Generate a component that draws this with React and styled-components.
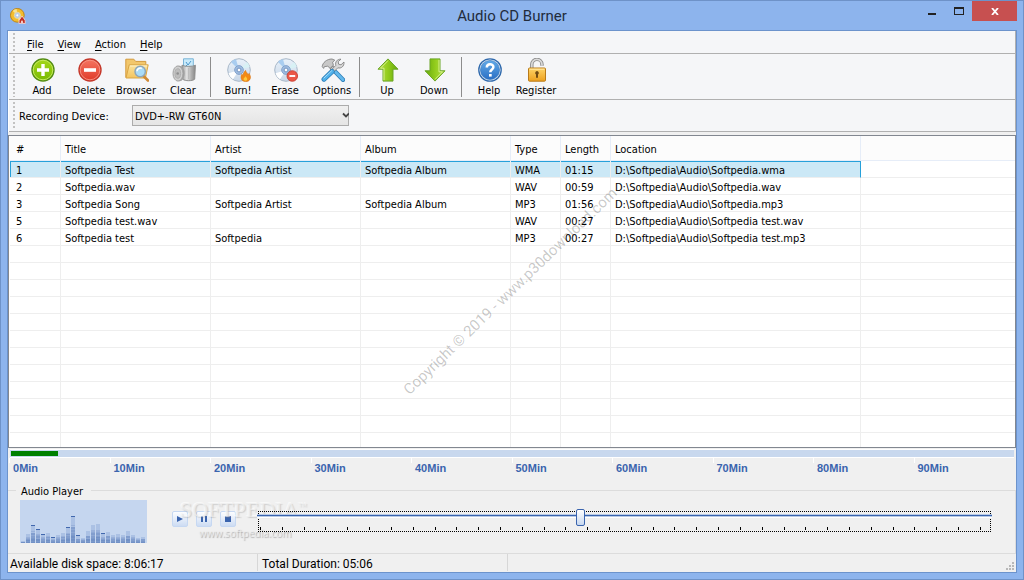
import React, { useState } from "react";
import styled, { createGlobalStyle } from "styled-components";

const theme = {
  frame: "#8db4ed",
  frameEdge: "#6e92c8",
  face: "#f0f0f0",
  bar: "#f5f6f8",
  line: "#b0b0b0",
  grid: "#eeeeee",
  blue: "#3a64ae",
};

const GlobalStyle = createGlobalStyle`
  * {
    box-sizing: border-box;
  }
  body {
    margin: 0;
    font-family: "DejaVu Sans Condensed", "Noto Sans", sans-serif;
    font-size: 11px;
    line-height: 14px;
    color: #000;
  }
  button, select, input {
    font: inherit;
    color: inherit;
    margin: 0;
  }
`;

const Window = styled.div`
  display: flex;
  flex-direction: column;
  height: 100vh;
  min-height: 400px;
  padding: 0 6px 6px;
  border: 1px solid ${theme.frameEdge};
  background: ${theme.frame};
`;

const TitleBar = styled.header`
  display: grid;
  grid-template-columns: 1fr auto 1fr;
  align-items: center;
  height: 29px;
  flex: none;
`;

const AppIcon = styled.div`
  display: flex;
  padding-left: 3px;
`;

const WindowTitle = styled.h1`
  margin: 0;
  font-family: Roboto, sans-serif;
  font-size: 15px;
  font-weight: 400;
  line-height: 20px;
  color: #222c3c;
`;

const WindowButtons = styled.div`
  display: flex;
  align-self: start;
  justify-content: flex-end;
`;

const WindowButton = styled.button`
  display: flex;
  align-items: center;
  justify-content: center;
  width: ${(p) => (p.$close ? 45 : 27)}px;
  height: 20px;
  padding: 0;
  border: 0;
  background: ${(p) => (p.$close ? "#c75050" : "transparent")};
`;

const Client = styled.main`
  display: flex;
  flex-direction: column;
  flex: 1;
  min-height: 0;
  border: 1px solid #6c93cc;
  background: ${theme.face};
`;

const Bars = styled.div`
  flex: none;
  border-left: 1px solid #fff;
  border-right: 1px solid ${theme.line};
  background: ${theme.bar};
`;

const Bar = styled.div`
  display: flex;
  align-items: stretch;
  height: ${(p) => p.$height}px;
  padding-left: 4px;
  border-bottom: 1px solid ${theme.line};
`;

const Grip = styled.span`
  width: 2px;
  margin: 2px 4px 2px 0;
  background: repeating-linear-gradient(#c2c2c2 0 2px, transparent 2px 4px);
`;

const Menu = styled.nav`
  display: flex;
  align-items: center;
  padding: 5px 0 0 1px;
`;

const MenuButton = styled.button`
  padding: 0 7px;
  border: 0;
  background: none;

  u {
    text-underline-offset: 2px;
  }
`;

const Tools = styled.div`
  display: flex;
  align-items: stretch;
`;

const ToolButton = styled.button`
  display: flex;
  flex-direction: column;
  align-items: center;
  gap: 2px;
  width: 47px;
  padding: 4px 1px 0 0;
  border: 0;
  background: none;
  white-space: nowrap;

  svg {
    margin-left: 2px;
  }
`;

const Separator = styled.span`
  width: 1px;
  margin: 3px 4px 2px 3px;
  background: #8c8c8c;
`;

const DeviceLabel = styled.label`
  align-self: center;
  width: 113px;
  padding-top: 2px;
`;

const SelectBox = styled.div`
  display: flex;
  position: relative;
  align-self: center;
  width: 217px;

  svg {
    position: absolute;
    right: 0;
    top: 7px;
    pointer-events: none;
  }
`;

const Select = styled.select`
  width: 100%;
  height: 21px;
  padding: 2px 2px 0;
  appearance: none;
  border: 1px solid #acacac;
  border-radius: 0;
  background: linear-gradient(#f0f0f0, #e5e5e5);
`;

const ListFrame = styled.div`
  position: relative;
  flex: 1;
  min-height: 0;
  margin-top: 3px;
  padding-left: 1px;
  overflow: hidden;
  border: 1px solid #828790;
  background: #fff;
`;

const TrackTable = styled.table`
  width: 100%;
  table-layout: fixed;
  border-spacing: 0;
`;

const HeadCell = styled.th`
  height: 25px;
  padding: 4px 4px 0;
  border-right: 1px solid #e6edf8;
  border-bottom: 1px solid #e6edf8;
  background: #fcfcfc;
  font-weight: 400;
  text-align: left;

  &:first-child {
    padding-left: 6px;
  }
  &:last-child {
    border-right: 0;
  }
`;

const Row = styled.tr`
  background: ${(p) => (p.$selected ? "#cbe8f6" : "transparent")};
`;

const Cell = styled.td`
  height: 17px;
  padding: 4px 4px 0;
  border-right: 1px solid ${theme.grid};
  border-bottom: 1px solid ${theme.grid};
  line-height: 12px;
  white-space: nowrap;

  &:first-child {
    padding-left: 6px;
  }
  ${Row} &:last-child {
    border-right: 0;
    background: #fff;
  }
  ${Row} &:nth-child(7) {
    border-right-color: ${(p) => (p.$selected ? "#26a0da" : theme.grid)};
  }
  ${(p) => p.$selected && "&:not(:last-child) { box-shadow: inset 0 1px #26a0da; }"}
  ${(p) => p.$selected && "&:first-child { box-shadow: inset 1px 1px #26a0da; }"}
`;

const CopyrightMark = styled.div`
  position: absolute;
  left: 404px;
  top: 243px;
  font-family: Roboto, sans-serif;
  font-size: 15px;
  line-height: 20px;
  color: rgba(0, 0, 0, 0.22);
  white-space: nowrap;
  transform: rotate(-44deg);
  transform-origin: 0 100%;
  pointer-events: none;
`;

const Timeline = styled.div`
  flex: none;
  margin: 1px 2px 0 1px;
`;

const Capacity = styled.div`
  height: 9px;
  margin-left: 1px;
  padding: 1px;
  border: solid #fff;
  border-width: 1px 0;
  background: #c8d8ee;
`;

const Used = styled.div`
  height: 5px;
  background: #008000;
`;

const Scale = styled.div`
  display: grid;
  grid-template-columns: repeat(10, 1fr);
`;

const ScaleMark = styled.span`
  padding: 3px 0 7px 4px;
  background: linear-gradient(#fff, #fff) 0 0 / 1px 5px no-repeat;
  font-family: "Liberation Sans", sans-serif;
  font-weight: 700;
  color: ${theme.blue};
`;

const Player = styled.fieldset`
  display: flex;
  flex: none;
  min-width: 0;
  margin: 0;
  padding: 2px 24px 10px 12px;
  border: 1px solid #dcdcdc;
  border-left: 0;
`;

const PlayerTitle = styled.legend`
  margin-left: -4px;
  padding: 4px 8px 0 5px;
  line-height: 12px;
`;

const Spectrum = styled.svg`
  flex: none;
  width: 127px;
  height: 43px;
  background: #c5d6ef;
`;

const PlayerControls = styled.div`
  display: flex;
  position: relative;
  gap: 8px;
  align-items: flex-start;
  padding: 11px 22px 0 25px;
`;

const PlayerButton = styled.button`
  display: flex;
  align-items: center;
  justify-content: center;
  width: 16px;
  height: 16px;
  padding: 0;
  border: 1px solid #c6d8f2;
  border-radius: 2px;
  background: linear-gradient(#fcfdff, #cddcf3);
`;

const Brand = styled.div`
  position: absolute;
  left: 33px;
  top: -2px;
  font-family: "Liberation Serif", serif;
  font-size: 22px;
  line-height: 24px;
  color: rgba(240, 240, 240, 0.7);
  text-shadow: 1px 1px 1px rgba(130, 130, 130, 0.3), -1px -1px 0 rgba(255, 255, 255, 0.6);
  white-space: nowrap;
  pointer-events: none;

  sup {
    font-size: 9px;
    line-height: 0;
  }
  small {
    display: block;
    margin-left: 19px;
    font-family: "Open Sans", sans-serif;
    font-size: 10px;
    line-height: 22px;
    text-shadow: 1px 1px 1px rgba(110, 110, 110, 0.5);
  }
`;

const Seek = styled.div`
  position: relative;
  flex: 1;
  height: 21px;
  margin-top: 11px;
  border: 1px dotted #000;
`;

const SeekInput = styled.input`
  position: absolute;
  inset: -3px -2px auto;
  width: calc(100% + 4px);
  height: 16px;
  appearance: none;
  background: linear-gradient(
    transparent 5px,
    #b9cbe6 5px 6px,
    ${theme.blue} 6px 7px,
    #b9cbe6 7px 8px,
    #fff 8px 9px,
    transparent 9px
  );
  outline: none;

  &::-webkit-slider-thumb {
    appearance: none;
    width: 9px;
    height: 17px;
    border: 1px solid ${theme.blue};
    border-radius: 2px;
    background: linear-gradient(#fff, #c8d8ef);
  }
`;

const SeekTicks = styled.div`
  display: flex;
  justify-content: space-between;
  padding: 15px 9px 0 1px;

  i {
    width: 1px;
    height: 3px;
    background: #000;
  }
`;

const StatusBar = styled.footer`
  display: flex;
  flex: none;
  align-items: stretch;
  height: 18px;
  font-family: Roboto, sans-serif;
  font-size: 12px;
  line-height: 16px;
`;

const StatusCell = styled.span`
  width: 250px;
  margin-bottom: 1px;
  padding: 2px 2px 0 4px;
  border-right: 1px solid #d7d7d7;

  &:first-child {
    padding-left: 2px;
  }
`;

const SizeGrip = styled.svg`
  align-self: flex-end;
  margin: 0 1px 1px auto;
`;

const Svg = ({ children, size = 24 }) => (
  <svg width={size} height={size} viewBox="0 0 24 24" fill="none" aria-hidden="true">
    {children}
  </svg>
);

const Gradient = ({ id, from, to }) => (
  <linearGradient id={id} x1="0" y1="0" x2="0" y2="1">
    <stop offset="0" stopColor={from} />
    <stop offset="1" stopColor={to} />
  </linearGradient>
);

const AddIcon = () => (
  <Svg>
    <Gradient id="add" from="#a5d81c" to="#78b900" />
    <circle cx="12" cy="12" r="11" fill="url(#add)" stroke="#538c14" strokeWidth="1.4" />
    <circle cx="12" cy="12" r="9.8" stroke="#c9eb65" strokeWidth=".9" />
    <path d="M12 6v12M6 12h12" stroke="#fff" strokeWidth="3.4" />
  </Svg>
);

const DeleteIcon = () => (
  <Svg>
    <Gradient id="del" from="#f57562" to="#e03a28" />
    <circle cx="12" cy="12" r="11" fill="url(#del)" stroke="#c4382b" strokeWidth="1.4" />
    <circle cx="12" cy="12" r="9.8" stroke="#f99a8a" strokeWidth=".8" />
    <path d="M6 12h12" stroke="#fff" strokeWidth="3.6" />
  </Svg>
);

const BrowserIcon = () => (
  <Svg>
    <Gradient id="fold" from="#fbe39e" to="#f3c45e" />
    <path d="M.8 19.5V1.2h8l1.8 2.2h10.2v3.4" fill="#f2c76c" stroke="#d49a3c" />
    <path d="M1 20 4.2 6.8h19L20.4 20z" fill="url(#fold)" stroke="#d9a545" />
    <path d="M5 8h17" stroke="#fdf1c7" />
    <path d="m19 18.5 4 4" stroke="#d08a35" strokeWidth="2.6" strokeLinecap="round" />
    <circle cx="15.2" cy="13.5" r="5.2" fill="#a9dcf8" stroke="#8fa6b8" strokeWidth="1.5" />
    <path d="M12 13.2a3.4 3.4 0 0 1 4.8-2.8" stroke="#fff" strokeWidth="1.6" />
  </Svg>
);

const ClearIcon = () => (
  <Svg>
    <linearGradient id="bin">
      <stop offset="0" stopColor="#9c9c9c" />
      <stop offset=".35" stopColor="#e2e2e2" />
      <stop offset="1" stopColor="#858585" />
    </linearGradient>
    <path d="M11.5.8h9.8v9h-9.8z" fill="#c9eafa" stroke="#79b4d8" />
    <path d="m14 4 2 3 3-4M13 9l2-2" stroke="#4c98cd" />
    <path d="M10 7.2c3 1.6 10.5 1.6 13.4 0l-.7 14c-2.4 2-9.6 2-12 0z" fill="url(#bin)" stroke="#8f8f8f" />
    <path d="M16.5 10v11M19.8 9.8v11" stroke="#aaa" strokeWidth=".5" />
    <ellipse cx="7.6" cy="15.5" rx="5" ry="7.8" fill="#a0a0a0" />
    <ellipse cx="6" cy="15.5" rx="5" ry="7.6" fill="#cfcfcf" stroke="#a2a2a2" />
    <ellipse cx="5.8" cy="15.5" rx="2.8" ry="4.8" fill="#bdbdbd" stroke="#b0b0b0" />
    <circle cx="5.7" cy="15.5" r="1.3" fill="#8f8f8f" />
  </Svg>
);

const Disc = () => (
  <>
    <Gradient id="disc" from="#e8f1fa" to="#cad8e8" />
    <circle cx="12" cy="12" r="11.3" fill="url(#disc)" stroke="#a9b8c8" strokeWidth="1" />
    <path d="M12 12 4 4.1A11 11 0 0 1 9 1.2z" fill="#a9cdf0" />
    <path d="m12 12 8-8a11 11 0 0 1 2.8 5z" fill="#d8f1f5" />
    <path d="m12 12-10.5 3.2A11 11 0 0 0 6 21.2z" fill="#fff" />
    <circle cx="12" cy="12" r="4.4" fill="#9dbbe0" stroke="#7999c5" strokeWidth=".8" />
    <circle cx="12" cy="12" r="1.9" fill="#fff" stroke="#5f83b5" strokeWidth=".8" />
  </>
);

const BurnIcon = () => (
  <Svg>
    <Disc />
    <path
      d="M18.6 12.4c.3 2 2 2.4 2.3 4.4l1.2-1.4c.8 1.6 1.7 3 1.2 5-.6 2.2-2.5 3.2-4.6 3.2-2.5 0-4.5-1.4-4.6-3.8-.1-1.5.3-2.5.7-3.5l1.3 1.1c.1-2 1-3.7 2.5-5z"
      fill="#f48a12"
      stroke="#d9700c"
      strokeWidth=".6"
    />
    <path d="M18.8 18c.2 1.5 1.7 1.8 1.4 3.4-.2 1-1 1.4-1.8 1.4-1.2 0-2-.8-1.8-2 .2-1 1.6-1.4 2.2-2.8z" fill="#ffc83a" />
  </Svg>
);

const EraseIcon = () => (
  <Svg>
    <Disc />
    <circle cx="18.3" cy="18" r="5.3" fill="#eb5848" stroke="#c4382b" strokeWidth=".8" />
    <path d="M15.4 18h5.8" stroke="#fff" strokeWidth="1.9" />
  </Svg>
);

const OptionsIcon = () => (
  <Svg>
    <path d="m14.5 14 7.5 7.8" stroke="#2e7fb8" strokeWidth="4.4" strokeLinecap="round" />
    <path d="m14.5 14 7.5 7.8" stroke="#62b8ec" strokeWidth="2.8" strokeLinecap="round" />
    <path
      d="m9 11 3-3.2 3 3-3 2.8zM1.2 8.6C1.6 4.8 5.6 1 11 1l2.8 1.2-2.2 2 .8 3-3.2 3.2-2.4-2.2-3.4.4-.8 1.8z"
      fill="#c8c8c8"
      stroke="#838383"
      strokeWidth=".9"
    />
    <path
      d="m9.8 12.4 5-5c-.8-3.2 1-6.4 5.2-6.2l-2.8 2.4.4 2.6 2.4.6 3-2.8c.4 4.4-3 6.8-6.2 5.8l-4.6 4.8z"
      fill="#d8d8d8"
      stroke="#838383"
      strokeWidth=".9"
    />
    <path d="m3 21.2 8.2-7.8" stroke="#2e7fb8" strokeWidth="5" strokeLinecap="round" />
    <path d="m3 21.2 8.2-7.8" stroke="#4fb0ea" strokeWidth="3.4" strokeLinecap="round" />
    <path d="m3 20 7.6-7.2" stroke="#a9ddf8" strokeLinecap="round" />
  </Svg>
);

const ArrowIcon = ({ down }) => (
  <Svg>
    <g transform={down ? "rotate(180 12 12)" : undefined}>
      <linearGradient id={down ? "arrowDown" : "arrowUp"}>
        <stop offset="0" stopColor="#b6e04a" />
        <stop offset=".5" stopColor="#92cc1c" />
        <stop offset="1" stopColor="#66a80c" />
      </linearGradient>
      <path
        d="M12 .9 22 11.2h-5v11.9H7V11.2H2z"
        fill={`url(#${down ? "arrowDown" : "arrowUp"})`}
        stroke="#6aa526"
        strokeLinejoin="round"
      />
      <path d="M12 2.6 4.5 10.2H8v11.9" stroke="#d6f08c" />
    </g>
  </Svg>
);

const HelpIcon = () => (
  <Svg>
    <Gradient id="help" from="#62aae8" to="#2a6fc4" />
    <circle cx="12" cy="12" r="11.2" fill="#e9f1fa" stroke="#2f69ac" strokeWidth="1.3" />
    <circle cx="12" cy="12" r="9.6" fill="url(#help)" stroke="#3b78ba" strokeWidth=".6" />
    <path d="M8.8 9.4c0-4 6.6-4 6.6-.4 0 2.6-3.1 2.4-3.1 5.2" stroke="#fff" strokeWidth="2.5" />
    <path d="M11 16h2.7v2.6H11z" fill="#fff" />
  </Svg>
);

const RegisterIcon = () => (
  <Svg>
    <Gradient id="lock" from="#ffd467" to="#eda01e" />
    <path d="M6.8 10V6.5a5 5 0 0 1 10.2 0v1.3" stroke="#888" strokeWidth="3.4" />
    <path d="M6.8 10V6.5a5 5 0 0 1 10.2 0v1.3" stroke="#dadada" strokeWidth="1.7" />
    <rect x="3.5" y="10" width="17" height="13.2" rx="1" fill="url(#lock)" stroke="#b87a1a" />
    <path d="M4.6 11.2h14.8" stroke="#ffe9a8" />
    <path d="M12 13a2 2 0 0 1 1 3.6v3.2h-2v-3.2a2 2 0 0 1 1-3.6z" fill="#704a12" />
  </Svg>
);

const AppLogo = () => (
  <Svg size={16}>
    <circle cx="11" cy="11" r="10.3" fill="#f3bd2d" stroke="#bd8110" strokeWidth="1.4" />
    <path d="M11 11 4 4.4A10 10 0 0 1 10 1.5zM11 11l7.5 6A10 10 0 0 1 13 20z" fill="#fbe28e" />
    <circle cx="11" cy="11" r="4.6" fill="#b9cdea" stroke="#e4d9aa" strokeWidth="1.5" />
    <circle cx="11" cy="11" r="1.6" fill="#fff" />
    <path d="m18 12 4.6 6.2.4 5H13.4l.4-5z" fill="#c22e22" stroke="#f7dede" strokeWidth="1.2" />
    <path d="m18 18 2 4h-4z" fill="#fff" />
  </Svg>
);

const tools = [
  { label: "Add", icon: <AddIcon /> },
  { label: "Delete", icon: <DeleteIcon /> },
  { label: "Browser", icon: <BrowserIcon /> },
  { label: "Clear", icon: <ClearIcon /> },
  null,
  { label: "Burn!", icon: <BurnIcon /> },
  { label: "Erase", icon: <EraseIcon /> },
  { label: "Options", icon: <OptionsIcon /> },
  null,
  { label: "Up", icon: <ArrowIcon /> },
  { label: "Down", icon: <ArrowIcon down /> },
  null,
  { label: "Help", icon: <HelpIcon /> },
  { label: "Register", icon: <RegisterIcon /> },
];

const columns = [
  { name: "#", width: 51 },
  { name: "Title", width: 150 },
  { name: "Artist", width: 150 },
  { name: "Album", width: 150 },
  { name: "Type", width: 50 },
  { name: "Length", width: 50 },
  { name: "Location", width: 250 },
];

const tracks = [
  ["1", "Softpedia Test", "Softpedia Artist", "Softpedia Album", "WMA", "01:15", "D:\\Softpedia\\Audio\\Softpedia.wma"],
  ["2", "Softpedia.wav", "", "", "WAV", "00:59", "D:\\Softpedia\\Audio\\Softpedia.wav"],
  ["3", "Softpedia Song", "Softpedia Artist", "Softpedia Album", "MP3", "01:56", "D:\\Softpedia\\Audio\\Softpedia.mp3"],
  ["5", "Softpedia test.wav", "", "", "WAV", "00:27", "D:\\Softpedia\\Audio\\Softpedia test.wav"],
  ["6", "Softpedia test", "Softpedia", "", "MP3", "00:27", "D:\\Softpedia\\Audio\\Softpedia test.mp3"],
];

const emptyRows = Array.from({ length: 40 }, () => columns.map(() => ""));

// [level, peak] for each band, in pixels
const bands = [
  [2, 0], [9, 0], [17, 18], [13, 14], [8, 9], [10, 0], [5, 6], [8, 0], [10, 0], [15, 16], [26, 27], [7, 8], [5, 0],
  [12, 0], [18, 0], [19, 0], [9, 10], [11, 0], [8, 0], [9, 0], [8, 0], [12, 0], [8, 0], [5, 0], [6, 0],
];

const App = () => {
  const [position, setPosition] = useState(44);

  return (
    <>
      <GlobalStyle />
      <Window>
        <TitleBar>
          <AppIcon>
            <AppLogo />
          </AppIcon>
          <WindowTitle>Audio CD Burner</WindowTitle>
          <WindowButtons>
            <WindowButton aria-label="Minimize">
              <svg width="8" height="8">
                <path d="M0 6h8v2H0z" fill="#222" />
              </svg>
            </WindowButton>
            <WindowButton aria-label="Maximize">
              <svg width="10" height="8">
                <path d="M0 0h10v8H0zM1 2v5h8V2z" fill="#222" fillRule="evenodd" />
              </svg>
            </WindowButton>
            <WindowButton $close aria-label="Close">
              <svg width="8" height="7">
                <path d="m1 0 6 7M7 0 1 7" stroke="#fff" strokeWidth="1.8" />
              </svg>
            </WindowButton>
          </WindowButtons>
        </TitleBar>
        <Client>
          <Bars>
            <Bar $height={23}>
              <Grip />
              <Menu>
                {["File", "View", "Action", "Help"].map((name) => (
                  <MenuButton key={name}>
                    <u>{name[0]}</u>
                    {name.slice(1)}
                  </MenuButton>
                ))}
              </Menu>
            </Bar>
            <Bar $height={46}>
              <Grip />
              <Tools>
                {tools.map((tool, i) =>
                  tool ? (
                    <ToolButton key={i}>
                      {tool.icon}
                      {tool.label}
                    </ToolButton>
                  ) : (
                    <Separator key={i} />
                  )
                )}
              </Tools>
            </Bar>
            <Bar $height={32}>
              <Grip />
              <DeviceLabel htmlFor="device">Recording Device:</DeviceLabel>
              <SelectBox>
                <Select id="device">
                  <option>DVD+-RW GT60N</option>
                </Select>
                <svg width="7" height="7">
                  <path d="m1 1.5 3 3 3-3" stroke="#444" strokeWidth="1.8" fill="none" />
                </svg>
              </SelectBox>
            </Bar>
          </Bars>
          <ListFrame>
            <TrackTable>
              <colgroup>
                {columns.map((col) => (
                  <col key={col.name} width={col.width} />
                ))}
                <col />
              </colgroup>
              <thead>
                <tr>
                  {columns.map((col) => (
                    <HeadCell key={col.name}>{col.name}</HeadCell>
                  ))}
                  <HeadCell as="td" />
                </tr>
              </thead>
              <tbody>
                {[...tracks, ...emptyRows].map((row, r) => (
                  <Row key={r} $selected={r === 0}>
                    {row.map((value, c) => (
                      <Cell key={c} $selected={r === 0}>
                        {value}
                      </Cell>
                    ))}
                    <Cell />
                  </Row>
                ))}
              </tbody>
            </TrackTable>
            <CopyrightMark>Copyright © 2019 - www.p30download.com</CopyrightMark>
          </ListFrame>
          <Timeline>
            <Capacity>
              <Used style={{ width: `${(5.1 / 108) * 100}%` }} />
            </Capacity>
            <Scale>
              {Array.from({ length: 10 }, (_, i) => (
                <ScaleMark key={i}>{i * 10}Min</ScaleMark>
              ))}
            </Scale>
          </Timeline>
          <Player>
            <PlayerTitle>Audio Player</PlayerTitle>
            <Spectrum viewBox="0 0 127 43" aria-hidden="true">
              <pattern id="steps" width="5" height="3" patternUnits="userSpaceOnUse">
                <path d="M0 0h5v2H0z" fill="#4e74b4" opacity=".2" />
              </pattern>
              {bands.map(([level, peak], i) => (
                <g key={i} transform={`translate(${i * 5 + 1} 0)`}>
                  <path d={`M0 ${43 - level}h4v${level}H0z`} fill="#6f92c9" opacity=".3" />
                  <path d={`M0 ${43 - Math.round(level * 0.7)}h4V43H0z`} fill="url(#steps)" />
                  <path d={`M0 ${43 - Math.round(level * 0.6)}h4V43H0z`} fill="#4e74b4" opacity=".3" />
                  <path d={`M0 ${43 - Math.round(level * 0.3)}h4V43H0z`} fill="#4e74b4" opacity=".3" />
                  {peak > 0 && <path d={`M0 ${43 - peak}h4v1H0z`} fill="#4067ad" />}
                </g>
              ))}
            </Spectrum>
            <PlayerControls>
              <PlayerButton aria-label="Play">
                <svg width="8" height="8">
                  <path d="M1 1l6 3-6 3z" fill={theme.blue} />
                </svg>
              </PlayerButton>
              <PlayerButton aria-label="Pause">
                <svg width="6" height="6">
                  <path d="M0 0h2v6H0zM4 0h2v6H4z" fill={theme.blue} />
                </svg>
              </PlayerButton>
              <PlayerButton aria-label="Stop">
                <svg width="6" height="6">
                  <path d="M0 0h6v6H0z" fill={theme.blue} />
                </svg>
              </PlayerButton>
              <Brand>
                SOFTPEDIA<sup>™</sup>
                <small>www.softpedia.com</small>
              </Brand>
            </PlayerControls>
            <Seek>
              <SeekTicks>
                {Array.from({ length: 34 }, (_, i) => (
                  <i key={i} />
                ))}
              </SeekTicks>
              <SeekInput
                type="range"
                aria-label="Position"
                value={position}
                onChange={(e) => setPosition(Number(e.target.value))}
              />
            </Seek>
          </Player>
          <StatusBar>
            <StatusCell>Available disk space: 8:06:17</StatusCell>
            <StatusCell>Total Duration: 05:06</StatusCell>
            <SizeGrip width="9" height="9" aria-hidden="true">
              <path d="M6 0h2v2H6zM3 3h2v2H3zM6 3h2v2H6zM0 6h2v2H0zM3 6h2v2H3zM6 6h2v2H6z" fill="#b8b8b8" />
            </SizeGrip>
          </StatusBar>
        </Client>
      </Window>
    </>
  );
};

export default App;
